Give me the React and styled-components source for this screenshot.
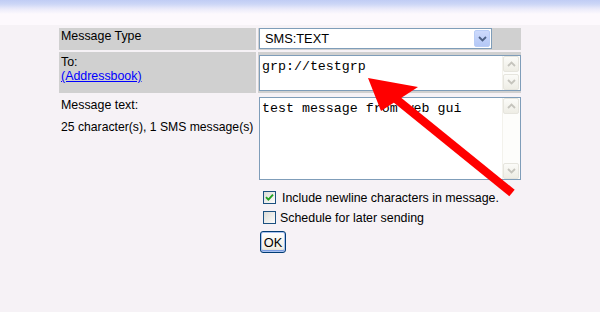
import React from "react";
import styled, { createGlobalStyle } from "styled-components";

const GlobalStyle = createGlobalStyle`
  html, body {
    margin: 0;
    padding: 0;
    background: #f6f2f6;
  }
  body {
    font-family: "Liberation Sans", Arial, sans-serif;
    font-size: 12.4px;
    color: #000;
  }
`;

const Page = styled.div`
  position: relative;
  width: 600px;
  height: 312px;
  overflow: hidden;
`;

const Header = styled.div`
  height: 25px;
  background: linear-gradient(#c0ccf4 0, #ccd6f6 4px, #ebebfa 9px, #fdf9fd 14px, #fdf9fd 25px);
`;

const FormGrid = styled.div`
  display: grid;
  grid-template-columns: 197px 263px;
  gap: 2px;
  margin: 3px 0 0 59px;
  width: 462px;
`;

const LabelCell = styled.div`
  height: ${(p) => p.$h}px;
  box-sizing: border-box;
  padding: ${(p) => p.$top}px 0 0 2px;
  background: ${(p) => (p.$shaded ? "#d0d0d0" : "transparent")};
  line-height: 14px;
  white-space: nowrap;
`;

const ValueCell = styled.div`
  height: ${(p) => (p.$h ? `${p.$h}px` : "auto")};
  box-sizing: border-box;
  padding: ${(p) => p.$top || 0}px 0 0 1px;
  background: ${(p) => (p.$shaded ? "#d0d0d0" : "transparent")};
`;

const Note = styled.div`
  margin-top: 8px;
  font-size: 12.2px;
`;

const Link = styled.a`
  color: #0000ff;
  text-decoration: underline;
  cursor: pointer;
`;

const SelectBox = styled.div`
  display: flex;
  width: 233px;
  height: 21px;
  box-sizing: border-box;
  border: 1px solid #7f9db9;
  background: #fff;
  padding: 1px;
`;

const SelectValue = styled.div`
  flex: 1;
  padding-left: 4px;
  font-size: 12.8px;
  line-height: 17px;
`;

const DropButton = styled.div`
  width: 16px;
  box-sizing: border-box;
  border: 1px solid #b9cdf6;
  border-radius: 2px;
  background: linear-gradient(#cddafc, #b4c8f6);
  display: flex;
  align-items: center;
  justify-content: center;
`;

const TextBox = styled.div`
  display: flex;
  width: 262px;
  height: ${(p) => p.$h}px;
  box-sizing: border-box;
  border: 1px solid #7f9db9;
  background: #fff;
`;

const TextContent = styled.div`
  flex: 1;
  padding: 3px 2px;
  font-family: "Liberation Mono", "Courier New", monospace;
  font-size: 13.3px;
  line-height: 15px;
  white-space: pre;
`;

const ScrollBar = styled.div`
  width: 17px;
  display: flex;
  flex-direction: column;
  justify-content: space-between;
  background: #fdfdfb;
  border-left: 1px solid #f3f2ec;
`;

const ScrollButton = styled.div`
  width: 16px;
  height: 16px;
  box-sizing: border-box;
  border: 1px solid #e6e5de;
  border-radius: 2px;
  background: linear-gradient(#fbfbf8, #eeede5);
  display: flex;
  align-items: center;
  justify-content: center;
`;

const Options = styled.div`
  display: flex;
  flex-direction: column;
  gap: 7px;
  padding-top: 6px;
`;

const CheckRow = styled.label`
  display: flex;
  align-items: center;
  height: 13px;
  padding-left: 4px;
  gap: ${(p) => p.$gap}px;
  white-space: nowrap;
`;

const Box = styled.span`
  width: 13px;
  height: 13px;
  box-sizing: border-box;
  border: 1px solid #1c5180;
  background: linear-gradient(135deg, #dcdcd6, #fdfdfc);
  display: flex;
  align-items: center;
  justify-content: center;
`;

const OkButton = styled.button`
  width: 26px;
  height: 22px;
  margin: 0 0 0 1px;
  padding: 0;
  box-sizing: border-box;
  border: 1px solid #003c74;
  border-radius: 3px;
  background: linear-gradient(#fefefd, #f1efe6 80%, #d8d4c6);
  box-shadow: inset 0 0 0 1px #a9c1ef, inset 0 -1px 0 1px #7a9de0;
  font-family: "Liberation Sans", Arial, sans-serif;
  font-size: 12.8px;
  color: #000;
`;

const Overlay = styled.svg`
  position: absolute;
  left: 0;
  top: 0;
  pointer-events: none;
`;

const Chevron = ({ up, color }) => (
  <svg width="9" height="6" viewBox="0 0 9 6">
    <path
      d={up ? "M1 5 L4.5 1.5 L8 5" : "M1 1 L4.5 4.5 L8 1"}
      fill="none"
      stroke={color}
      strokeWidth="1.8"
    />
  </svg>
);

const Scroller = () => (
  <ScrollBar>
    <ScrollButton>
      <Chevron up color="#c5c4bd" />
    </ScrollButton>
    <ScrollButton>
      <Chevron color="#c5c4bd" />
    </ScrollButton>
  </ScrollBar>
);

const Check = ({ checked }) => (
  <Box>
    {checked && (
      <svg width="9" height="9" viewBox="0 0 9 9">
        <path d="M1 4.2 L3.4 6.6 L8 1.6" fill="none" stroke="#21a121" strokeWidth="1.9" />
      </svg>
    )}
  </Box>
);

const App = () => (
  <Page>
    <GlobalStyle />
    <Header />
    <FormGrid>
      <LabelCell $shaded $h={22} $top={1}>
        Message Type
      </LabelCell>
      <ValueCell $shaded $h={22}>
        <SelectBox>
          <SelectValue>SMS:TEXT</SelectValue>
          <DropButton>
            <Chevron color="#4d6185" />
          </DropButton>
        </SelectBox>
      </ValueCell>

      <LabelCell $shaded $h={41} $top={3}>
        To:
        <br />
        <Link>(Addressbook)</Link>
      </LabelCell>
      <ValueCell $shaded $h={41} $top={3}>
        <TextBox $h={36}>
          <TextContent>grp://testgrp</TextContent>
          <Scroller />
        </TextBox>
      </ValueCell>

      <LabelCell $h={88} $top={3}>
        Message text:
        <Note>25 character(s), 1 SMS message(s)</Note>
      </LabelCell>
      <ValueCell $h={88} $top={2}>
        <TextBox $h={83}>
          <TextContent>test message from web gui</TextContent>
          <Scroller />
        </TextBox>
      </ValueCell>

      <div />
      <ValueCell>
        <Options>
          <CheckRow $gap={6}>
            <Check checked />
            Include newline characters in message.
          </CheckRow>
          <CheckRow $gap={4}>
            <Check />
            Schedule for later sending
          </CheckRow>
          <div>
            <OkButton>OK</OkButton>
          </div>
        </Options>
      </ValueCell>
    </FormGrid>

    <Overlay width="600" height="312" viewBox="0 0 600 312">
      <line x1="396" y1="99" x2="512" y2="193" stroke="#ff0000" strokeWidth="8.5" />
      <polygon points="368,78 418,87 381,111" fill="#ff0000" />
    </Overlay>
  </Page>
);

export default App;
